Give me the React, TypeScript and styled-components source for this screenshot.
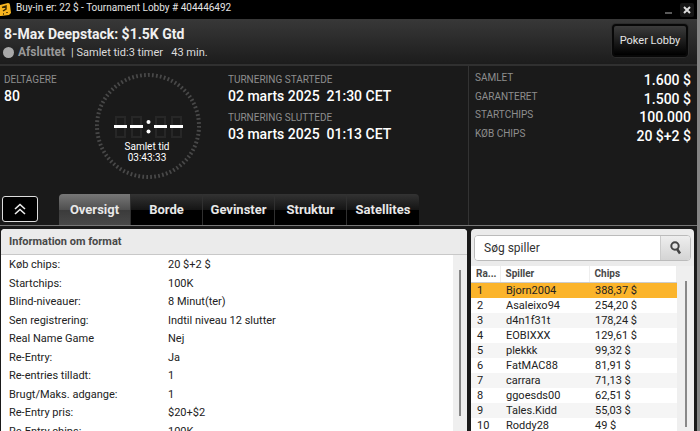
import React from "react";
import styled, { createGlobalStyle, css } from "styled-components";

const GlobalStyle = createGlobalStyle`
  * { box-sizing: border-box; }
  body { margin: 0; background: #1a1a1a; font-family: Roboto, "Liberation Sans", sans-serif; }
  button, input { font-family: inherit; }
  dl, dt, dd, h1, h2, p { margin: 0; }
`;

const Window = styled.div`
  display: flex;
  flex-direction: column;
  height: 100vh;
  overflow: hidden;
  color: #fff;
  background: #1a1a1a;
  border-right: 3px solid #858585;
`;

const TitleBar = styled.header`
  display: flex;
  align-items: center;
  flex: none;
  height: 19px;
  padding-right: 3px;
  background: #000;
`;

const TitleText = styled.span`
  flex: 1;
  margin: 0 0 4px 5px;
  font-size: 10px;
  line-height: 15px;
  color: #e4e4e4;
`;

const WindowButton = styled.button<{ $raised?: boolean }>`
  display: grid;
  place-items: center;
  width: 14px;
  height: 14px;
  margin: 0 0 0 4px;
  padding: 0;
  border: 0;
  border-radius: 2px;
  background: ${(p) => (p.$raised ? "#161616" : "transparent")};
`;

const Heading = styled.section`
  display: flex;
  justify-content: space-between;
  flex: none;
  height: 47px;
  padding: 5px 9px 0 3px;
  background: linear-gradient(#383838, #1c1c1c);
  border-bottom: 2px solid #303030;
`;

const Title = styled.h1`
  padding-left: 1px;
  font-size: 14px;
  font-weight: 700;
  line-height: 20px;
  color: #f0f0f0;
`;

const Status = styled.p`
  display: flex;
  align-items: center;
  font-size: 11px;
  line-height: 17px;
  color: #dcdcdc;
  white-space: pre;
`;

const StatusDot = styled.span`
  width: 11px;
  height: 11px;
  margin-right: 4px;
  border-radius: 50%;
  background: #aaa;
`;

const StatusName = styled.strong`
  margin-right: 6px;
  font-size: 12px;
  color: #999;
`;

const LobbyButton = styled.button`
  width: 76px;
  height: 33px;
  padding: 0;
  border: 2px solid #080808;
  border-radius: 4px;
  background: linear-gradient(#3c3c3c, #000);
  box-shadow: 0 0 0 1px #2c2c2c;
  color: #e4e4e4;
  font-size: 11px;
`;

const Summary = styled.section`
  display: flex;
  flex: none;
  height: 159px;
`;

const SummaryMain = styled.div`
  display: flex;
  flex-direction: column;
  justify-content: space-between;
  flex: 1;
  border-right: 1px solid #333;
`;

const Facts = styled.div`
  display: grid;
  grid-template-columns: 90px 138px 1fr;
`;

const FactList = styled.dl`
  padding: 5px 0 0 4px;
`;

const Schedule = styled(FactList)`
  padding-left: 0;
`;

const FactLabel = styled.dt`
  font-size: 10px;
  line-height: 17px;
  color: #8e8e8e;
`;

const FactValue = styled.dd`
  margin-bottom: 4px;
  font-size: 14px;
  font-weight: 500;
  line-height: 17px;
  white-space: pre;
`;

const Timer = styled.svg`
  display: block;
  width: 116px;
  height: 116px;
  margin-top: 3px;
`;

const Prizes = styled.dl`
  width: 228px;
  padding: 3px 6px 0;
`;

const PrizeRow = styled.div`
  display: flex;
  justify-content: space-between;
  height: 19px;
  &:nth-child(even) { height: 18px; }
  dt { font-size: 10px; line-height: 17px; color: #8e8e8e; }
  dd { font-size: 14px; font-weight: 500; line-height: 22px; }
`;

const TabBar = styled.nav`
  display: flex;
  align-items: flex-end;
  padding-left: 2px;
`;

const CollapseButton = styled.button`
  display: grid;
  place-items: center;
  width: 36px;
  height: 26px;
  margin: 0 21px 3px 0;
  padding: 0;
  border: 1px solid #ddd;
  border-radius: 3px;
  background: #000;
`;

const Tab = styled.button<{ $active?: boolean }>`
  width: 72px;
  height: 31px;
  padding: 0;
  border: 0;
  border-right: 1px solid #303030;
  background: ${(p) =>
    p.$active
      ? "linear-gradient(#777, #505050 50%, #3b3b3b 52%, #484848)"
      : "linear-gradient(#333, #151515 50%, #000 52%)"};
  color: #e8e8e8;
  font-size: 13px;
  font-weight: 700;
  &:nth-of-type(2) { border-top-left-radius: 4px; }
  &:last-child { border-top-right-radius: 4px; border-right: 0; }
`;

const Content = styled.main`
  display: flex;
  flex: 1;
  gap: 4px;
  min-height: 0;
  padding: 3px 3px 0 1px;
  border-top: 1px solid #777;
`;

const panel = css`
  min-height: 0;
  overflow: hidden;
  border-radius: 4px 4px 0 0;
  color: #222;
`;

const FormatPanel = styled.section`
  ${panel}
  display: flex;
  flex-direction: column;
  flex: 1;
  background: #fff;
`;

const PanelTitle = styled.h2`
  flex: none;
  height: 26px;
  padding-left: 8px;
  border-bottom: 1px solid #c8c8c8;
  background: #ebebeb;
  color: #484848;
  font-size: 11px;
  line-height: 25px;
`;

const PanelBody = styled.div`
  display: flex;
  flex: 1;
  min-height: 0;
  overflow: hidden;
`;

const FormatList = styled.dl`
  flex: 1;
  padding: 1px 8px 0;
`;

const FormatRow = styled.div`
  display: grid;
  grid-template-columns: 159px 1fr;
  height: 19px;
  font-size: 11px;
  line-height: 18px;
  &:nth-child(even) { height: 18px; }
`;

const ScrollTrack = styled.div<{ $width: number }>`
  display: flex;
  flex: none;
  justify-content: center;
  width: ${(p) => p.$width}px;
  padding-top: 15px;
  background: #efefef;
`;

const ScrollThumb = styled.span`
  width: 2px;
  height: 146px;
  background: #888;
`;

const PlayerPanel = styled.aside`
  ${panel}
  width: 223px;
  background: #ebebeb;
`;

const Search = styled.form`
  display: flex;
  height: 26px;
  margin: 6px 3px 5px;
  overflow: hidden;
  border: 1px solid #bbb;
  border-radius: 4px;
  background: #fff;
`;

const SearchInput = styled.input`
  flex: 1;
  min-width: 0;
  padding: 0 0 0 9px;
  border: 0;
  background: #fff;
  font-size: 12px;
  &::placeholder { color: #333; opacity: 1; }
`;

const SearchButton = styled.button`
  display: grid;
  place-items: center;
  width: 30px;
  padding: 0;
  border: 0;
  border-left: 1px solid #ccc;
  background: linear-gradient(#eee, #d4d4d4);
`;

const PlayerBody = styled.div`
  display: flex;
`;

const PlayerTable = styled.table`
  flex: 1;
  border-collapse: collapse;
  table-layout: fixed;
  width: 0;
  background: #fff;
  font-size: 11px;
  line-height: 15px;
  th, td { padding: 0 0 0 6px; text-align: left; white-space: nowrap; }
  th {
    height: 16px;
    padding-left: 5px;
    border-right: 1px solid #eee;
    border-bottom: 1px solid #ccc;
    color: #484848;
    font-size: 10px;
  }
  th:first-child { width: 29px; }
  th:nth-child(2) { width: 89px; }
`;

const PlayerRow = styled.tr<{ $leader: boolean }>`
  height: 15px;
  background: #fff;
  &:nth-child(odd) { background: ${(p) => (p.$leader ? "#fbb42b" : "#f5f5f5")}; }
`;

const tabs = ["Oversigt", "Borde", "Gevinster", "Struktur", "Satellites"];

const prizes = [
  ["SAMLET", "1.600 $"],
  ["GARANTERET", "1.500 $"],
  ["STARTCHIPS", "100.000"],
  ["KØB CHIPS", "20 $+2 $"],
];

const format = [
  ["Køb chips:", "20 $+2 $"],
  ["Startchips:", "100K"],
  ["Blind-niveauer:", "8 Minut(ter)"],
  ["Sen registrering:", "Indtil niveau 12 slutter"],
  ["Real Name Game", "Nej"],
  ["Re-Entry:", "Ja"],
  ["Re-entries tilladt:", "1"],
  ["Brugt/Maks. adgange:", "1"],
  ["Re-Entry pris:", "$20+$2"],
  ["Re-Entry chips:", "100K"],
];

const players = [
  ["Bjorn2004", "388,37 $"],
  ["Asaleixo94", "254,20 $"],
  ["d4n1f31t", "178,24 $"],
  ["EOBIXXX", "129,61 $"],
  ["plekkk", "99,32 $"],
  ["FatMAC88", "81,91 $"],
  ["carrara", "71,13 $"],
  ["ggoesds00", "62,51 $"],
  ["Tales.Kidd", "55,03 $"],
  ["Roddy28", "49 $"],
];

function Clock() {
  return (
    <Timer viewBox="0 0 116 116" role="img" aria-label="Samlet tid 03:43:33">
      <circle cx="58" cy="57" r="51" fill="none" stroke="#484848" strokeWidth="4" pathLength="240" strokeDasharray="1.3 1.7" />
      {[24, 40, 64, 80].map((x) => (
        <g key={x}>
          <path d={`M${x + 2} 48h9v20h-9z`} fill="none" stroke="#272727" strokeWidth="2" />
          <path d={`M${x} 57.5h13`} stroke="#fff" strokeWidth="3" />
        </g>
      ))}
      <circle cx="58.5" cy="53" r="2" fill="#fff" />
      <circle cx="58.5" cy="62.5" r="2" fill="#fff" />
      <g fill="#fff" fontSize="10" textAnchor="middle">
        <text x="57" y="81">Samlet tid</text>
        <text x="57" y="92">03:43:33</text>
      </g>
    </Timer>
  );
}

export default function App() {
  return (
    <>
      <GlobalStyle />
      <Window>
        <TitleBar>
          <svg width="11" height="15" viewBox="0 0 11 15" aria-hidden="true">
            <path d="M0 3 8 1q2 0 2 2l1 8-2 2-8 1H0z" fill="#f8b51f" />
            <path d="M2 5.5 6 4v3L3 9M7 10v1M3 12h1" fill="none" stroke="#3b2a00" strokeWidth="1.5" />
          </svg>
          <TitleText>Buy-in er: 22 $ - Tournament Lobby # 404446492</TitleText>
          <WindowButton aria-label="Minimer">
            <svg width="8" height="8" viewBox="0 0 8 8"><path d="M0 7h7" stroke="#777" strokeWidth="1.5" /></svg>
          </WindowButton>
          <WindowButton $raised aria-label="Luk">
            <svg width="8" height="8" viewBox="0 0 8 8"><path d="m1 1 6 6M7 1 1 7" stroke="#ddd" strokeWidth="2" /></svg>
          </WindowButton>
        </TitleBar>

        <Heading>
          <div>
            <Title>8-Max Deepstack: $1.5K Gtd</Title>
            <Status>
              <StatusDot />
              <StatusName>Afsluttet</StatusName>
              {"| Samlet tid:3 timer   43 min."}
            </Status>
          </div>
          <LobbyButton>Poker Lobby</LobbyButton>
        </Heading>

        <Summary>
          <SummaryMain>
            <Facts>
              <FactList>
                <FactLabel>DELTAGERE</FactLabel>
                <FactValue>80</FactValue>
              </FactList>
              <Clock />
              <Schedule>
                <FactLabel>TURNERING STARTEDE</FactLabel>
                <FactValue>{"02 marts 2025  21:30 CET"}</FactValue>
                <FactLabel>TURNERING SLUTTEDE</FactLabel>
                <FactValue>{"03 marts 2025  01:13 CET"}</FactValue>
              </Schedule>
            </Facts>
            <TabBar>
              <CollapseButton aria-label="Skjul">
                <svg width="12" height="12" viewBox="0 0 12 12">
                  <path d="m1 6 5-4.5L11 6M1 11l5-4.5L11 11" fill="none" stroke="#eee" strokeWidth="1.6" />
                </svg>
              </CollapseButton>
              {tabs.map((name, i) => (
                <Tab key={name} $active={i === 0}>{name}</Tab>
              ))}
            </TabBar>
          </SummaryMain>
          <Prizes>
            {prizes.map(([label, value]) => (
              <PrizeRow key={label}>
                <dt>{label}</dt>
                <dd>{value}</dd>
              </PrizeRow>
            ))}
          </Prizes>
        </Summary>

        <Content>
          <FormatPanel>
            <PanelTitle>Information om format</PanelTitle>
            <PanelBody>
              <FormatList>
                {format.map(([label, value]) => (
                  <FormatRow key={label}>
                    <dt>{label}</dt>
                    <dd>{value}</dd>
                  </FormatRow>
                ))}
              </FormatList>
              <ScrollTrack $width={14}><ScrollThumb /></ScrollTrack>
            </PanelBody>
          </FormatPanel>

          <PlayerPanel>
            <Search onSubmit={(e) => e.preventDefault()}>
              <SearchInput aria-label="Søg spiller" placeholder="Søg spiller" />
              <SearchButton aria-label="Søg">
                <svg width="12" height="14" viewBox="0 0 12 14">
                  <circle cx="5" cy="5" r="3.7" fill="none" stroke="#444" strokeWidth="2" />
                  <path d="m7 8 3 4.5" stroke="#444" strokeWidth="2.5" />
                </svg>
              </SearchButton>
            </Search>
            <PlayerBody>
              <PlayerTable>
                <thead>
                  <tr><th>Ra...</th><th>Spiller</th><th>Chips</th></tr>
                </thead>
                <tbody>
                  {players.map(([name, chips], i) => (
                    <PlayerRow key={name} $leader={i === 0}>
                      <td>{i + 1}</td>
                      <td>{name}</td>
                      <td>{chips}</td>
                    </PlayerRow>
                  ))}
                </tbody>
              </PlayerTable>
              <ScrollTrack $width={17}><ScrollThumb /></ScrollTrack>
            </PlayerBody>
          </PlayerPanel>
        </Content>
      </Window>
    </>
  );
}
